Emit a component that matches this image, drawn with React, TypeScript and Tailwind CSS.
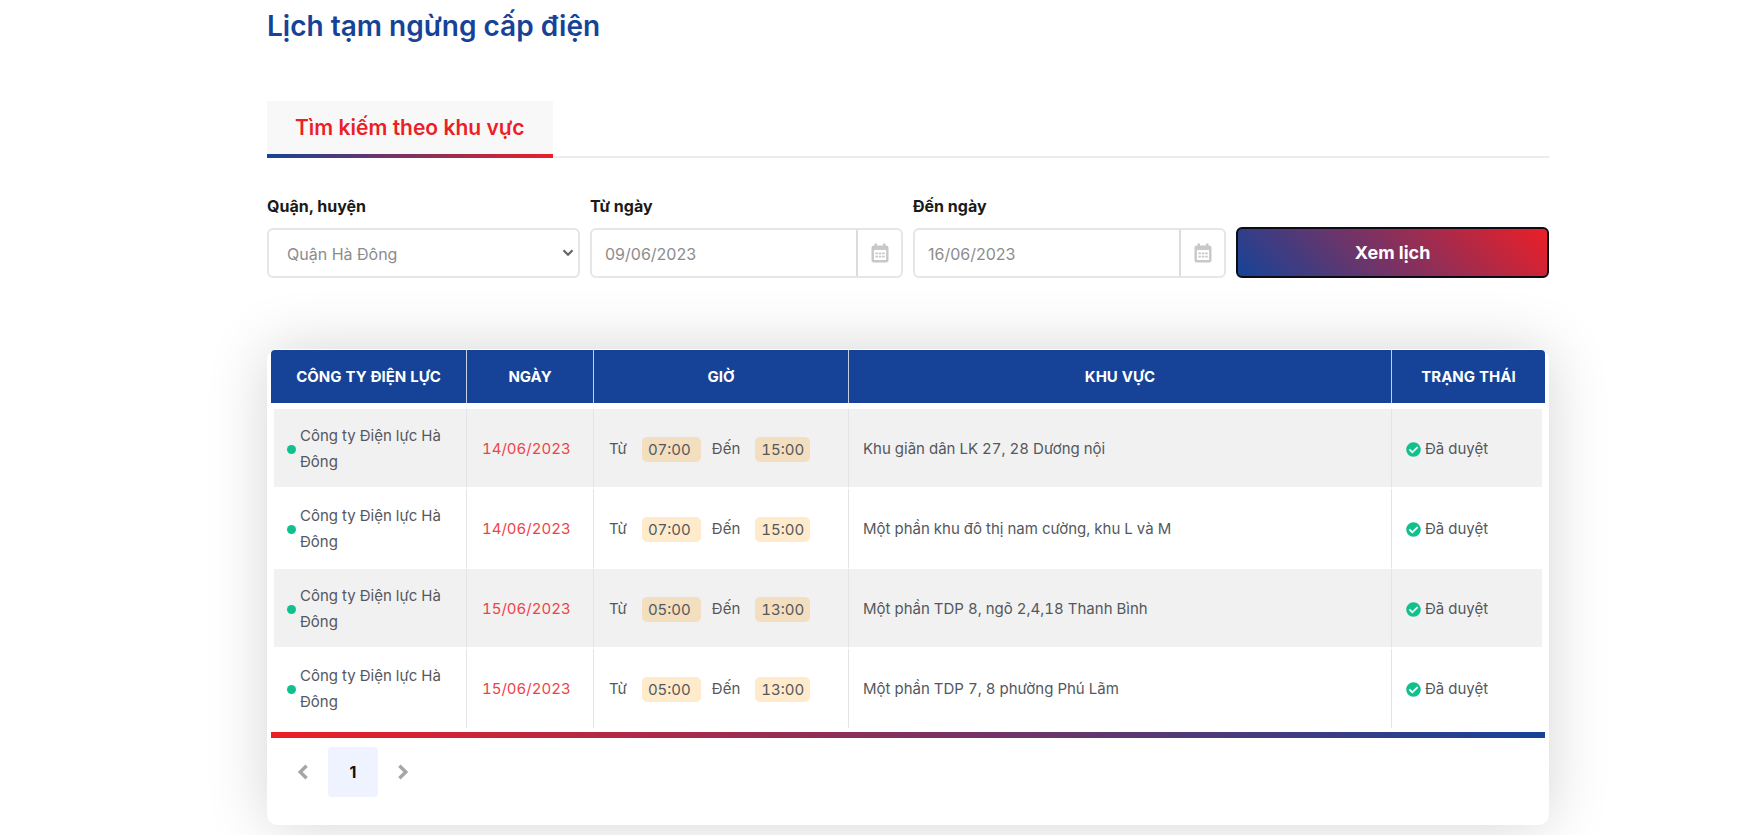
import { useState } from "react";
import { FaCheckCircle } from "react-icons/fa";

type Outage = {
    company: string;
    date: string;
    from: string;
    to: string;
    area: string;
    status: string;
};

const outages: Outage[] = [
    { company: "Công ty Điện lực Hà Đông", date: "14/06/2023", from: "07:00", to: "15:00", area: "Khu giãn dân LK 27, 28 Dương nội", status: "Đã duyệt" },
    { company: "Công ty Điện lực Hà Đông", date: "14/06/2023", from: "07:00", to: "15:00", area: "Một phần khu đô thị nam cường, khu L và M", status: "Đã duyệt" },
    { company: "Công ty Điện lực Hà Đông", date: "15/06/2023", from: "05:00", to: "13:00", area: "Một phần TDP 8, ngõ 2,4,18 Thanh Bình", status: "Đã duyệt" },
    { company: "Công ty Điện lực Hà Đông", date: "15/06/2023", from: "05:00", to: "13:00", area: "Một phần TDP 7, 8 phường Phú Lãm", status: "Đã duyệt" },
];

const CalendarIcon = () => (
    <svg width="18" height="20" viewBox="0 0 18 20" fill="none" aria-hidden="true">
        <path d="M4.8 0.5v3M13.2 0.5v3" stroke="#c8c8c8" strokeWidth="2.4" />
        <rect x="1.7" y="3.7" width="14.6" height="14.6" rx="1" stroke="#c8c8c8" strokeWidth="2.4" />
        <path d="M1.5 5.5h15" stroke="#c8c8c8" strokeWidth="3" />
        <path d="M4.4 10.4h9.4M4.4 13.6h9.4" stroke="#c8c8c8" strokeWidth="1.8" strokeDasharray="2.5 0.9" />
    </svg>
);

type ChevronProps = {
    direction: "left" | "right";
};

const Chevron: React.FC<ChevronProps> = ({ direction }) => (
    <svg width="12" height="16" viewBox="0 0 12 16" fill="none" aria-hidden="true">
        <path d={direction === "left" ? "M9.6 1.8L3.2 8L9.6 14.2" : "M2.4 1.8L8.8 8L2.4 14.2"} stroke="#a6a6a6" strokeWidth="3.4" />
    </svg>
);

type DateFieldProps = {
    id: string;
    label: string;
    initial: string;
};

const DateField: React.FC<DateFieldProps> = ({ id, label, initial }) => {
    const [value, setValue] = useState(initial);

    return (
        <div className="flex flex-col">
            <label htmlFor={id} className="mb-2.5 text-base leading-6 font-bold text-[#1a1a1a]">
                {label}
            </label>
            <div className="flex h-[50px] rounded-md border-2 border-[#e4e6e8]">
                <input
                    id={id}
                    type="text"
                    value={value}
                    onChange={(e) => setValue(e.target.value)}
                    className="min-w-0 flex-1 bg-transparent px-[13px] pt-0.5 text-base text-[#8c8c8c] outline-none"
                />
                <button type="button" aria-label={`Chọn ${label.toLowerCase()}`} className="flex w-[45px] items-center justify-center border-l-2 border-[#d9dce0]">
                    <CalendarIcon />
                </button>
            </div>
        </div>
    );
};

const SearchForm = () => (
    <form className="mt-9 grid grid-cols-4 items-end gap-2.5" onSubmit={(e) => e.preventDefault()}>
        <div className="flex flex-col">
            <label htmlFor="district" className="mb-2.5 text-base leading-6 font-bold text-[#1a1a1a]">
                Quận, huyện
            </label>
            <div className="relative">
                <select
                    id="district"
                    defaultValue="ha-dong"
                    className="block h-[50px] w-full appearance-none rounded-md border-2 border-[#e4e6e8] bg-white pt-0.5 pr-8 pl-[18px] text-base text-[#8c8c8c] outline-none"
                >
                    <option value="ha-dong">Quận Hà Đông</option>
                </select>
                <svg className="pointer-events-none absolute top-[21px] right-1.5" width="12" height="8" viewBox="0 0 12 8" fill="none" aria-hidden="true">
                    <path d="M1.5 1.2L6 5.8L10.5 1.2" stroke="#666666" strokeWidth="2.2" />
                </svg>
            </div>
        </div>
        <DateField id="from-date" label="Từ ngày" initial="09/06/2023" />
        <DateField id="to-date" label="Đến ngày" initial="16/06/2023" />
        <button
            type="submit"
            className="h-[51px] rounded-md border-2 border-[#0c0c14] bg-[linear-gradient(45deg,#164397_0%,#ec1f27_100%)] text-lg font-bold text-white"
        >
            Xem lịch
        </button>
    </form>
);

const OutageTable = () => (
    <table className="w-full table-fixed border-separate border-spacing-0 text-[15px] tabular-nums">
        <colgroup>
            <col className="w-[195px]" />
            <col className="w-[127px]" />
            <col className="w-[255px]" />
            <col />
            <col className="w-[154px]" />
        </colgroup>
        <thead>
            <tr className="h-[53px] text-white uppercase [&>th]:bg-[#164397] [&>th]:pt-0.5 [&>th]:font-bold">
                <th scope="col" className="rounded-tl">Công ty điện lực</th>
                <th scope="col" className="border-l border-[#c5d0e5]">Ngày</th>
                <th scope="col" className="border-l border-[#c5d0e5]">Giờ</th>
                <th scope="col" className="border-l border-[#c5d0e5]">Khu vực</th>
                <th scope="col" className="rounded-tr border-l border-[#c5d0e5]">Trạng thái</th>
            </tr>
            <tr className="h-1.5" aria-hidden="true">
                <td colSpan={5}></td>
            </tr>
        </thead>
        <tbody className="text-[#54585d]">
            {outages.map((row, i) => (
                <tr
                    key={i}
                    className="h-20 [&>td]:border-b-2 [&>td]:border-b-transparent [&>td]:bg-clip-padding [&>td]:pt-0.5 [&:nth-child(odd)>td]:bg-[#f1f1f1]"
                >
                    <td className="border-l-[3px] border-l-transparent pr-4 pl-[13px]">
                        <div className="flex items-center gap-1">
                            <span className="size-[9px] shrink-0 rounded-full bg-[#0fc18c]"></span>
                            <span className="leading-[26px]">{row.company}</span>
                        </div>
                    </td>
                    <td className="border-l border-l-[#e2e4e6] pl-[15px] text-[#ef4349]">{row.date}</td>
                    <td className="border-l border-l-[#e2e4e6] pl-[15px]">
                        <div className="flex items-center">
                            <span>Từ</span>
                            <span className="ml-[15px] rounded-[5px] bg-[#ff9900]/20 pr-2.5 pl-1.5 leading-[25px]">{row.from}</span>
                            <span className="ml-[11px]">Đến</span>
                            <span className="ml-[15px] rounded-[5px] bg-[#ff9900]/20 px-1.5 leading-[25px]">{row.to}</span>
                        </div>
                    </td>
                    <td className="border-l border-l-[#e2e4e6] pr-4 pl-[14px]">{row.area}</td>
                    <td className="border-r-[3px] border-l border-r-transparent border-l-[#e2e4e6] pl-[14px]">
                        <div className="flex items-center gap-1">
                            <FaCheckCircle size={15} className="text-[#0fc18c]" />
                            <span>{row.status}</span>
                        </div>
                    </td>
                </tr>
            ))}
        </tbody>
    </table>
);

const Pagination = () => (
    <nav aria-label="Phân trang" className="mt-[9px] flex pl-[7px]">
        <button type="button" aria-label="Trang trước" className="flex size-[50px] items-center justify-center">
            <Chevron direction="left" />
        </button>
        <button type="button" aria-current="page" className="size-[50px] rounded-sm bg-[#eff3ff] text-base font-bold text-[#111111]">
            1
        </button>
        <button type="button" aria-label="Trang sau" className="flex size-[50px] items-center justify-center">
            <Chevron direction="right" />
        </button>
    </nav>
);

export default function App() {
    return (
        <main className="overflow-hidden bg-white pr-[204px] pb-2.5 pl-[267px] font-['Inter','Noto_Sans',sans-serif]">
            <h1 className="pt-2 text-[28px] leading-9 font-semibold text-[#164397]">Lịch tạm ngừng cấp điện</h1>

            <div className="mt-[57px] flex items-end">
                <button type="button" className="flex h-[57px] flex-col bg-[#f8f8f8]">
                    <span className="flex flex-1 items-center px-7 text-[21px] font-semibold text-[#ec1f27]">Tìm kiếm theo khu vực</span>
                    <span className="h-1 w-full bg-linear-to-r/srgb from-[#164397] to-[#ec1f27]"></span>
                </button>
                <div className="h-0.5 flex-1 bg-[#ececec]"></div>
            </div>

            <SearchForm />

            <section className="mt-[71px] rounded-[10px] bg-white px-1 pt-px pb-7 shadow-[0_0_60px_rgba(0,0,0,0.17)]">
                <OutageTable />
                <div className="mt-[3px] h-1.5 bg-linear-to-r/srgb from-[#ec1f27] to-[#164397]"></div>
                <Pagination />
            </section>
        </main>
    );
}
